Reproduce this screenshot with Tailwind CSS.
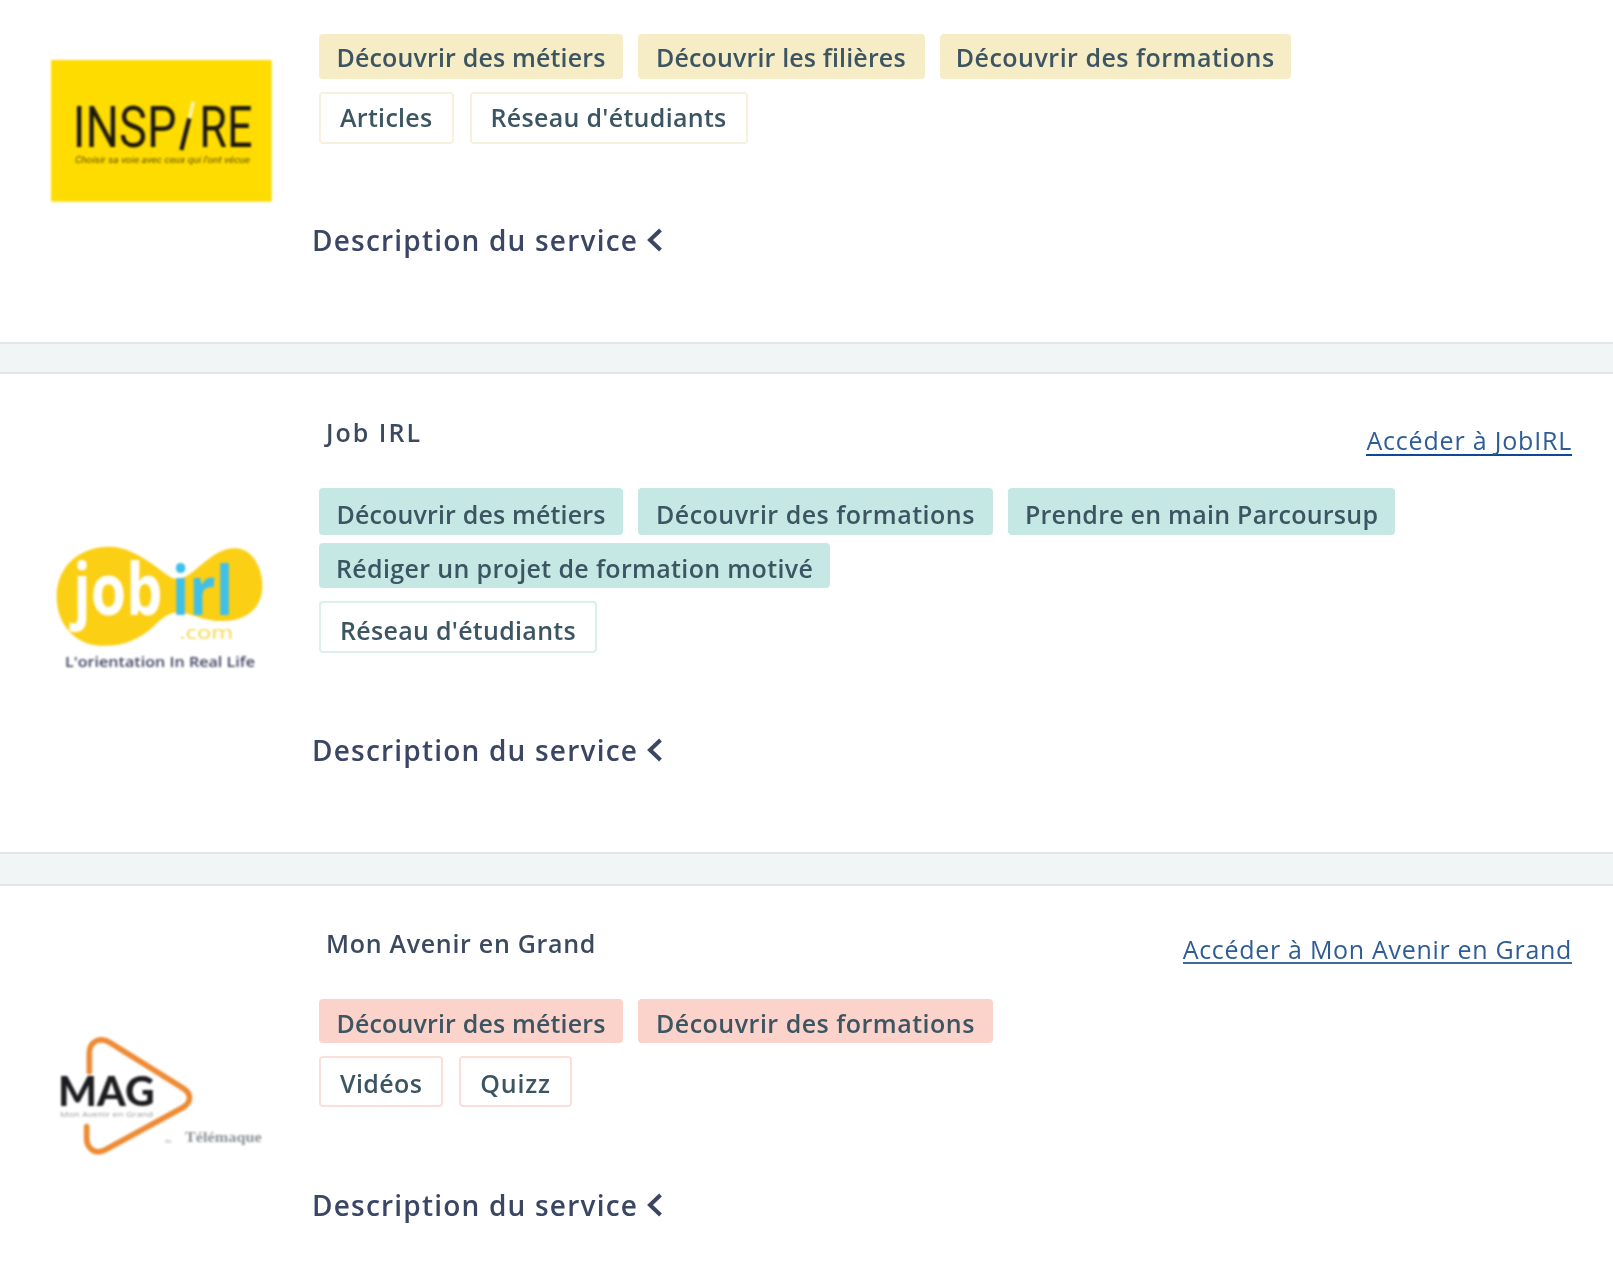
<!DOCTYPE html>
<html lang="fr">
<head>
  <meta charset="UTF-8">
  <meta name="viewport" content="width=device-width, initial-scale=1.0">
  <title>Services d'orientation</title>
  <script src="https://cdn.jsdelivr.net/npm/@tailwindcss/browser@4"></script>
</head>
<body class="bg-white font-['Open_Sans',sans-serif] text-[25px] leading-none tracking-[0.15px] text-[#3c5562] h-[1280px] overflow-hidden flex flex-col">

  <!-- Inspire -->
  <section class="h-[342px] flex">
    <div class="w-[312px] shrink-0 pt-[50px] pl-[40px]">
      <svg class="blur-[0.8px]" width="240" height="160" viewBox="0 0 720 480">
        <rect x="33" y="30" width="662" height="425" fill="#ffdc00"/>
        <text x="98" y="290" font-family="Roboto" font-size="172" textLength="312" lengthAdjust="spacingAndGlyphs" fill="#1d1a0c">INSP</text>
        <text x="478" y="290" font-family="Roboto" font-size="172" textLength="160" lengthAdjust="spacingAndGlyphs" fill="#1d1a0c">RE</text>
        <path d="M424 300 L448 205" stroke="#1d1a0c" stroke-width="13"/>
        <path d="M448 205 L460 155" stroke="#fff6c0" stroke-width="10"/>
        <text x="105" y="338" font-family="Roboto" font-style="italic" font-size="26" textLength="525" lengthAdjust="spacingAndGlyphs" fill="#5c5000">Choisir sa voie avec ceux qui l'ont vécue</text>
      </svg>
    </div>
    <div class="flex-1 pt-[34px] pr-[41px] blur-[0.4px]">
      <div class="ml-[7px] flex flex-wrap gap-x-[15px] gap-y-[8px]">
        <span class="px-[17.5px] pt-[2px] h-[45px] flex items-center rounded bg-[#f6ecc6] font-semibold">Découvrir des métiers</span>
        <span class="pl-[18px] pr-[19px] pt-[2px] h-[45px] flex items-center rounded bg-[#f6ecc6] font-semibold">Découvrir les filières</span>
        <span class="px-[16px] pt-[2px] h-[45px] flex items-center rounded bg-[#f6ecc6] font-semibold tracking-[0.5px]">Découvrir des formations</span>
      </div>
      <div class="ml-[7px] mt-[13px] flex flex-wrap gap-x-[16px]">
        <span class="px-[19px] pb-[2px] h-[52px] flex items-center rounded border-2 border-[#f6f0dc] font-semibold tracking-[0.3px]">Articles</span>
        <span class="px-[19px] pb-[2px] h-[52px] flex items-center rounded border-2 border-[#f6f0dc] font-semibold tracking-[0.3px]">Réseau d'étudiants</span>
      </div>
      <button class="mt-[81px] h-[30px] flex items-center gap-[9px] text-[28px] font-semibold tracking-[1.2px] text-[#3b4664]">
        Description du service
        <svg width="16" height="24" viewBox="0 0 16 24" fill="none" stroke="#3b4664" stroke-width="4"><path d="M13.5 2 L3 12 L13.5 22"/></svg>
      </button>
    </div>
  </section>

  <div class="h-[32px] shrink-0 bg-[#f2f5f6] border-y-2 border-[#e3e6e7]"></div>

  <!-- Job IRL -->
  <section class="h-[478px] flex">
    <div class="w-[312px] shrink-0 pt-[146px] pl-[30px]">
      <svg class="blur-[0.8px]" width="260" height="160" viewBox="0 0 780 480">
        <path d="M80 230 C80 130 160 78 240 80 C310 82 370 135 420 170 C480 205 530 80 620 85 C680 90 705 170 695 220 C680 300 590 320 500 290 C440 270 420 270 370 320 C320 365 260 385 190 375 C120 360 80 300 80 230 Z" fill="#fbcf14"/>
        <text x="130" y="285" font-family="Open Sans" font-weight="700" font-size="215" textLength="268" lengthAdjust="spacingAndGlyphs" fill="#fff">job</text>
        <text x="425" y="285" font-family="Open Sans" font-weight="700" font-size="205" textLength="185" lengthAdjust="spacingAndGlyphs" fill="#3fc0ea">irl</text>
        <text x="448" y="358" font-family="Open Sans" font-size="54" textLength="162" lengthAdjust="spacingAndGlyphs" fill="#f4d64a">.com</text>
        <text x="105" y="442" font-family="Open Sans" font-weight="600" font-size="42" textLength="570" lengthAdjust="spacingAndGlyphs" fill="#3f4160">L'orientation In Real Life</text>
      </svg>
    </div>
    <div class="flex-1 pt-[45px] pr-[41px] blur-[0.4px]">
      <div class="h-[69px] flex justify-between items-start">
        <h3 class="ml-[14px] h-[26px] flex items-center font-semibold tracking-[2px] text-[#3c4a60]">Job IRL</h3>
        <a href="#" class="mt-[7px] h-[30px] flex items-center text-[#2d5c96] tracking-[0.8px] border-b-2 border-[#0d4a94]">Accéder à JobIRL</a>
      </div>
      <div class="ml-[7px] flex flex-wrap gap-x-[15px] gap-y-[8px]">
        <span class="px-[17.5px] pt-[6px] h-[47px] flex items-center rounded bg-[#c5e8e5] font-semibold">Découvrir des métiers</span>
        <span class="px-[18px] pt-[6px] h-[47px] flex items-center rounded bg-[#c5e8e5] font-semibold tracking-[0.5px]">Découvrir des formations</span>
        <span class="px-[17px] pt-[6px] h-[47px] flex items-center rounded bg-[#c5e8e5] font-semibold tracking-[0.25px]">Prendre en main Parcoursup</span>
        <span class="px-[17px] pt-[6px] h-[45px] flex items-center rounded bg-[#c5e8e5] font-semibold tracking-[0.35px]">Rédiger un projet de formation motivé</span>
      </div>
      <div class="ml-[7px] mt-[13px] flex">
        <span class="px-[19px] pt-[6px] h-[52px] flex items-center rounded border-2 border-[#dcefed] font-semibold tracking-[0.3px]">Réseau d'étudiants</span>
      </div>
      <button class="mt-[82px] h-[30px] flex items-center gap-[9px] text-[28px] font-semibold tracking-[1.2px] text-[#3b4664]">
        Description du service
        <svg width="16" height="24" viewBox="0 0 16 24" fill="none" stroke="#3b4664" stroke-width="4"><path d="M13.5 2 L3 12 L13.5 22"/></svg>
      </button>
    </div>
  </section>

  <div class="h-[34px] shrink-0 bg-[#f2f5f6] border-y-2 border-[#e3e6e7]"></div>

  <!-- Mon Avenir en Grand -->
  <section class="flex-1 flex">
    <div class="w-[312px] shrink-0 pt-[134px] pl-[30px]">
      <svg class="blur-[0.8px]" width="260" height="160" viewBox="0 0 780 480">
        <path d="M178 155 L178 100 C178 62 212 50 240 68 L460 205 C485 222 485 245 460 262 L225 390 C195 405 170 385 170 355 L170 320" fill="none" stroke="#ee8a34" stroke-width="17" stroke-linecap="round"/>
        <text x="84" y="258" font-family="Lato" font-weight="900" font-size="124" textLength="290" lengthAdjust="spacingAndGlyphs" fill="#1c1c20">MAG</text>
        <text x="90" y="292" font-family="Open Sans" font-size="24" textLength="280" lengthAdjust="spacingAndGlyphs" fill="#9a9a9e">Mon Avenir en Grand</text>
        <text x="405" y="368" font-family="Liberation Serif" font-size="20" fill="#a0a4a8">de</text>
        <text x="465" y="366" font-family="Liberation Serif" font-weight="700" font-size="44" textLength="230" lengthAdjust="spacingAndGlyphs" fill="#8b9094">Télémaque</text>
      </svg>
    </div>
    <div class="flex-1 pt-[44px] pr-[41px] blur-[0.4px]">
      <div class="h-[69px] flex justify-between items-start">
        <h3 class="ml-[14px] h-[26px] flex items-center font-semibold tracking-[0.7px] text-[#3c4a60]">Mon Avenir en Grand</h3>
        <a href="#" class="mt-[6px] h-[28px] flex items-center text-[#2d5c96] tracking-[0.7px] border-b-2 border-[#3f6a9c]">Accéder à Mon Avenir en Grand</a>
      </div>
      <div class="ml-[7px] flex flex-wrap gap-x-[15px]">
        <span class="px-[17.5px] pt-[4px] h-[44px] flex items-center rounded bg-[#fbd3cb] font-semibold">Découvrir des métiers</span>
        <span class="px-[18px] pt-[4px] h-[44px] flex items-center rounded bg-[#fbd3cb] font-semibold tracking-[0.5px]">Découvrir des formations</span>
      </div>
      <div class="ml-[7px] mt-[13px] flex gap-x-[16px]">
        <span class="px-[19px] pt-[4px] h-[51px] flex items-center rounded border-2 border-[#fbe0da] font-semibold tracking-[0.4px]">Vidéos</span>
        <span class="px-[19px] pt-[4px] h-[51px] flex items-center rounded border-2 border-[#fbe0da] font-semibold tracking-[0.8px]">Quizz</span>
      </div>
      <button class="mt-[83px] h-[30px] flex items-center gap-[9px] text-[28px] font-semibold tracking-[1.2px] text-[#3b4664]">
        Description du service
        <svg width="16" height="24" viewBox="0 0 16 24" fill="none" stroke="#3b4664" stroke-width="4"><path d="M13.5 2 L3 12 L13.5 22"/></svg>
      </button>
    </div>
  </section>

</body>
</html>
